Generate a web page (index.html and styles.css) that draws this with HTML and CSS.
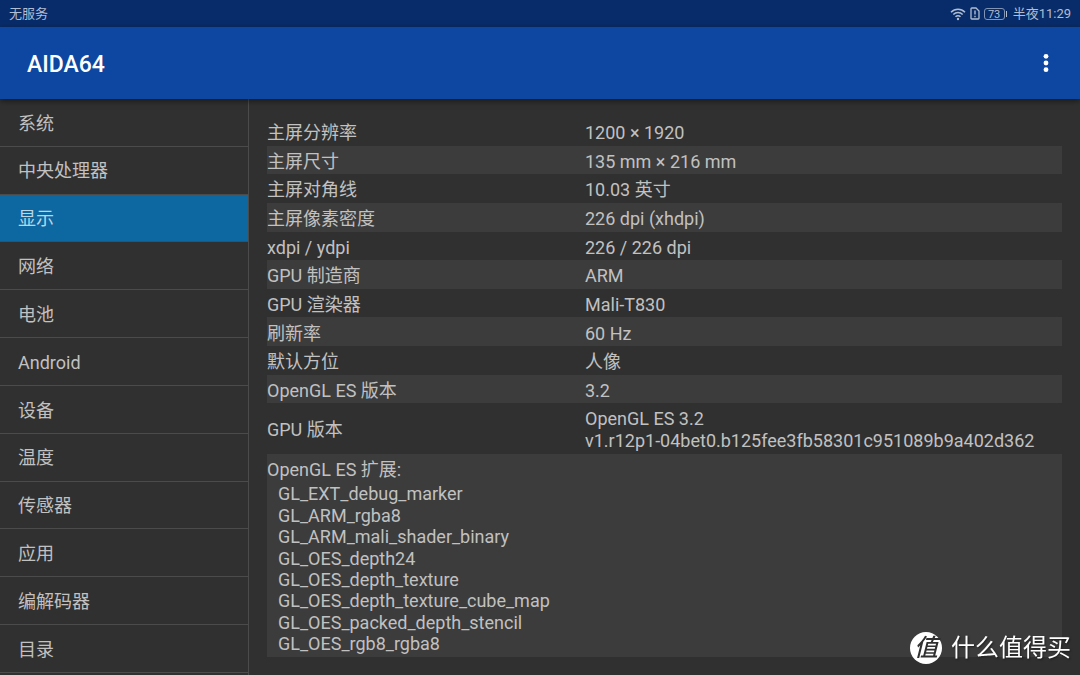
FILE: index.html
```html
<!DOCTYPE html>
<html lang="zh-CN">
<head>
<meta charset="utf-8">
<meta name="viewport" content="width=device-width, initial-scale=1">
<title>AIDA64</title>
<link rel="stylesheet" href="styles.css">
</head>
<body>
<div class="status-bar">
  <span>无服务</span>
  <div class="status-icons">
    <svg class="wifi" viewBox="0 0 16 14" aria-hidden="true"><g fill="none" stroke="currentColor" stroke-width="1.5"><path d="M1 5.2C5 1.2 11 1.2 15 5.2"/><path d="M3.3 7.6C6 4.8 10 4.8 12.7 7.6"/><path d="M5.5 9.8C7 8.3 9 8.3 10.5 9.8"/></g><circle cx="8" cy="12" r="1.2" fill="currentColor"/></svg>
    <svg class="sim" viewBox="0 0 10 13" aria-hidden="true"><path d="M1 1.8Q1 1 1.8 1H6L9 4V11.2Q9 12 8.2 12H1.8Q1 12 1 11.2Z" fill="none" stroke="currentColor" stroke-width="1.3"/><path d="M5 3.6V7.6M5 8.8V10.2" stroke="currentColor" stroke-width="1.4"/></svg>
    <span class="battery">73</span>
    <span>半夜11:29</span>
  </div>
</div>
<header class="app-bar">
  <h1 class="app-title">AIDA64</h1>
  <button class="more" type="button" aria-label="更多选项"><svg viewBox="0 0 6 20" aria-hidden="true"><g fill="currentColor"><circle cx="3" cy="3.3" r="2.4"/><circle cx="3" cy="10" r="2.4"/><circle cx="3" cy="16.7" r="2.4"/></g></svg></button>
</header>
<div class="content">
  <nav class="sidebar">
    <a class="nav-item" href="#system">系统</a>
    <a class="nav-item" href="#cpu">中央处理器</a>
    <a class="nav-item selected" href="#display" aria-current="page">显示</a>
    <a class="nav-item" href="#network">网络</a>
    <a class="nav-item" href="#battery">电池</a>
    <a class="nav-item" href="#android">Android</a>
    <a class="nav-item" href="#devices">设备</a>
    <a class="nav-item" href="#thermal">温度</a>
    <a class="nav-item" href="#sensors">传感器</a>
    <a class="nav-item" href="#apps">应用</a>
    <a class="nav-item" href="#codecs">编解码器</a>
    <a class="nav-item" href="#directories">目录</a>
  </nav>
  <main class="details">
    <table class="info">
      <tbody>
        <tr><th scope="row">主屏分辨率</th><td>1200 × 1920</td></tr>
        <tr><th scope="row">主屏尺寸</th><td>135 mm × 216 mm</td></tr>
        <tr><th scope="row">主屏对角线</th><td>10.03 英寸</td></tr>
        <tr><th scope="row">主屏像素密度</th><td>226 dpi (xhdpi)</td></tr>
        <tr><th scope="row">xdpi / ydpi</th><td>226 / 226 dpi</td></tr>
        <tr><th scope="row">GPU 制造商</th><td>ARM</td></tr>
        <tr><th scope="row">GPU 渲染器</th><td>Mali-T830</td></tr>
        <tr><th scope="row">刷新率</th><td>60 Hz</td></tr>
        <tr><th scope="row">默认方位</th><td>人像</td></tr>
        <tr><th scope="row">OpenGL ES 版本</th><td>3.2</td></tr>
        <tr><th scope="row">GPU 版本</th><td>OpenGL ES 3.2<br>v1.r12p1-04bet0.b125fee3fb58301c951089b9a402d362</td></tr>
        <tr><td class="extensions" colspan="2">OpenGL ES 扩展:
          <ul class="extension-list">
            <li>GL_EXT_debug_marker</li>
            <li>GL_ARM_rgba8</li>
            <li>GL_ARM_mali_shader_binary</li>
            <li>GL_OES_depth24</li>
            <li>GL_OES_depth_texture</li>
            <li>GL_OES_depth_texture_cube_map</li>
            <li>GL_OES_packed_depth_stencil</li>
            <li>GL_OES_rgb8_rgba8</li>
          </ul></td></tr>
      </tbody>
    </table>
  </main>
</div>
<div class="watermark"><span class="watermark-badge">值</span><span>什么值得买</span></div>
</body>
</html>
```
FILE: styles.css
```css
* {
  box-sizing: border-box;
}

body {
  margin: 0;
  min-height: 100vh;
  display: flex;
  flex-direction: column;
  background: #303030;
  color: #c1c1c1;
  font-family: Roboto, "Noto Sans CJK SC", sans-serif;
  font-size: 18px;
  line-height: 1.2;
}

.status-bar {
  display: flex;
  align-items: center;
  justify-content: space-between;
  height: 27px;
  padding: 0 9px;
  background: #082c69;
  color: #b0bdd2;
  font-size: 13px;
}

.status-icons {
  display: flex;
  align-items: center;
  gap: 4px;
}

.wifi {
  width: 16px;
  height: 14px;
}

.sim {
  width: 10px;
  height: 13px;
}

.battery {
  position: relative;
  width: 21px;
  height: 12px;
  margin-right: 4px;
  border: 1px solid #8294b4;
  border-radius: 3px;
  font-size: 11px;
  line-height: 11px;
  text-align: center;
}

.battery::after {
  content: "";
  position: absolute;
  top: 2px;
  right: -3px;
  width: 1px;
  height: 6px;
  background: #b0bdd2;
}

.app-bar {
  position: relative;
  display: flex;
  align-items: center;
  justify-content: space-between;
  height: 72px;
  padding: 0 18px 0 27px;
  background: #0d47a1;
  color: #fff;
  box-shadow: 0 2px 6px rgba(0, 0, 0, 0.5);
}

.app-title {
  margin: 0;
  padding-top: 3px;
  font-size: 23px;
  font-weight: 500;
}

.more {
  display: flex;
  justify-content: center;
  width: 32px;
  padding: 8px 0;
  border: 0;
  background: none;
  color: inherit;
}

.more svg {
  width: 6px;
  height: 20px;
}

.content {
  flex: 1;
  display: grid;
  grid-template-columns: 249px 1fr;
}

.sidebar {
  display: grid;
  grid-auto-rows: 1fr;
  padding-bottom: 2px;
  border-right: 1px solid #4b4b4b;
}

.nav-item {
  display: flex;
  align-items: center;
  padding: 2px 18px 0;
  border-bottom: 1px solid #4b4b4b;
  color: inherit;
  text-decoration: none;
}

.nav-item.selected {
  background: #0d68a2;
  color: #bcd6e6;
}

.details {
  display: flex;
  padding: 18px;
}

.info {
  width: 100%;
  table-layout: fixed;
  border-collapse: collapse;
}

.info th,
.info td {
  padding: 5px 0 2px;
  font-weight: 400;
  text-align: left;
}

.info th {
  width: 40%;
}

.info tr:nth-child(even) {
  background: #3c3c3c;
}

.info .extensions {
  vertical-align: top;
}

.extension-list {
  margin: 3px 0 0;
  padding: 0 0 0 11px;
  list-style: none;
  line-height: 1.19;
}

.watermark {
  position: fixed;
  right: 9px;
  bottom: 11px;
  display: flex;
  align-items: center;
  gap: 9px;
  color: #fff;
  font-size: 24px;
  line-height: 32px;
  text-shadow: 1px 1px 2px rgba(0, 0, 0, 0.5);
}

.watermark-badge {
  width: 32px;
  height: 32px;
  border-radius: 50%;
  background: #fff;
  color: #303030;
  font-weight: 500;
  text-align: center;
  text-shadow: none;
  font-style: italic;
}
```
